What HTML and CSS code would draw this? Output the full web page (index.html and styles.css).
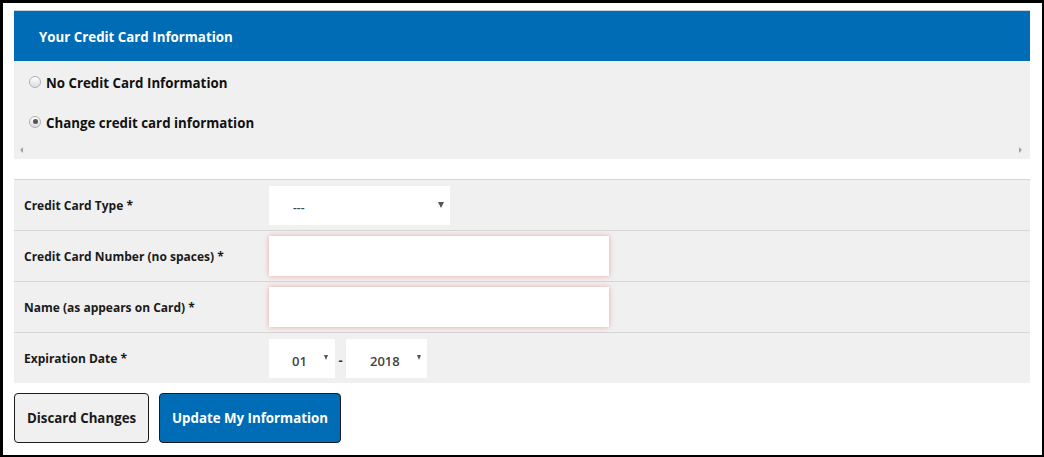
FILE: index.html
```html
<!DOCTYPE html>
<html>
<head>
<meta charset="utf-8">
<link rel="stylesheet" href="styles.css">
</head>
<body>
<div class="panel">
  <div class="panel-head">Your Credit Card Information</div>
  <div class="options">
    <div class="opt"><span class="radio"></span><span>No Credit Card Information</span></div>
    <div class="opt"><span class="radio checked"></span><span>Change credit card information</span></div>
    <div class="scroll"><span class="arr left"></span><span class="arr right"></span></div>
  </div>
</div>
<div class="form">
  <div class="row">
    <div class="label">Credit Card Type *</div>
    <div class="field"><div class="select type"><span class="val dash">---</span><span class="caret"></span></div></div>
  </div>
  <div class="row">
    <div class="label">Credit Card Number (no spaces) *</div>
    <div class="field"><div class="input"></div></div>
  </div>
  <div class="row">
    <div class="label">Name (as appears on Card) *</div>
    <div class="field"><div class="input"></div></div>
  </div>
  <div class="row last">
    <div class="label">Expiration Date *</div>
    <div class="field date">
      <div class="select month"><span class="val">01</span><span class="caret small"></span></div>
      <span class="sep">-</span>
      <div class="select year"><span class="val">2018</span><span class="caret small"></span></div>
    </div>
  </div>
</div>
<div class="buttons">
  <div class="btn discard">Discard Changes</div>
  <div class="btn update">Update My Information</div>
</div>
</body>
</html>
```
FILE: styles.css
```css
html, body { margin: 0; padding: 0; }
body {
  box-sizing: border-box;
  width: 1044px;
  height: 457px;
  border-style: solid;
  border-color: #000;
  border-width: 3px 2px 2px 3px;
  padding: 7px 12px 0 11px;
  background: #fff;
  font-family: "Open Sans", "Liberation Sans", sans-serif;
  color: #1a1a1a;
  overflow: hidden;
}
.panel-head {
  border-top: 1px solid #c9d3dc;
  height: 51px;
  box-sizing: border-box;
  padding-top: 2px;
  background: #006cb6;
  color: #fff;
  font-weight: 700;
  font-size: 13.3px;
  display: flex;
  align-items: center;
  padding-left: 25px;
}
.options {
  background: #f0f0f0;
  height: 98px;
  box-sizing: border-box;
  padding-top: 13px;
  display: flex;
  flex-direction: column;
}
.opt {
  display: flex;
  align-items: center;
  height: 18px;
  margin-bottom: 22px;
  padding-left: 15px;
  font-size: 13.3px;
  font-weight: 700;
  color: #111;
}
.radio {
  width: 12px;
  height: 12px;
  border-radius: 50%;
  border: 1px solid #b0b0b0;
  background: linear-gradient(#fdfdfd, #dedede);
  box-sizing: border-box;
  margin-right: 5px;
  margin-top: -3px;
  position: relative;
}
.radio.checked::after {
  content: "";
  position: absolute;
  left: 2.5px; top: 2.5px;
  width: 5px; height: 5px;
  border-radius: 50%;
  background: #555;
}
.scroll {
  display: flex;
  justify-content: space-between;
  padding: 0 8px 0 6px;
  margin-top: -7px;
}
.arr { width: 0; height: 0; border-top: 3.5px solid transparent; border-bottom: 3.5px solid transparent; }
.arr.left { border-right: 3.5px solid #a3a3a3; }
.arr.right { border-left: 3.5px solid #a3a3a3; }

.form {
  margin-top: 20px;
  border-top: 1px solid #d6d6d6;
}
.row {
  display: flex;
  align-items: center;
  height: 50px;
  background: #f0f0f0;
  border-bottom: 1px solid #d6d6d6;
}
.row.last { border-bottom: 0; }
.label {
  width: 245px;
  padding-left: 10px;
  font-size: 12px;
  font-weight: 700;
  color: #1a1a1a;
}
.field { display: flex; align-items: center; }
.select {
  background: #fff;
  height: 39px;
  display: flex;
  align-items: center;
  position: relative;
  box-sizing: border-box;
  font-size: 13px;
  font-weight: 600;
  color: #444;
}
.select.type { width: 181px; padding-left: 24px; }
.select .val { margin-top: 6px; }
.val.dash { font-size: 12px; color: #4a4a4a; margin-top: 4px; }
.caret {
  position: absolute;
  right: 6px;
  top: 16px;
  width: 0; height: 0;
  border-left: 3px solid transparent;
  border-right: 3px solid transparent;
  border-top: 6px solid #555;
}
.caret.small { top: 16px; border-left-width: 2.5px; border-right-width: 2.5px; border-top-width: 5px; }
.select.month { width: 66px; padding-left: 23px; }
.select.year { width: 81px; padding-left: 24px; }
.select.month .caret { right: 7px; }
.select.year .caret { right: 6px; }
.sep { width: 11px; text-align: center; font-size: 13px; font-weight: 700; color: #333; margin-top: 4px; }
.input {
  width: 340px;
  height: 40px;
  background: #fff;
  box-shadow: 0 0 5px rgba(235, 100, 100, 0.55);
}
.buttons {
  display: flex;
  gap: 10px;
  margin-top: 10px;
}
.btn {
  height: 50px;
  box-sizing: border-box;
  border: 1px solid #1c1c1c;
  border-radius: 4px;
  display: flex;
  align-items: center;
  justify-content: center;
  font-size: 13.3px;
  font-weight: 700;
}
.btn.discard { width: 135px; background: #f0f0f0; color: #1a1a1a; }
.btn.update { width: 182px; background: #006cb6; color: #fff; }
```
